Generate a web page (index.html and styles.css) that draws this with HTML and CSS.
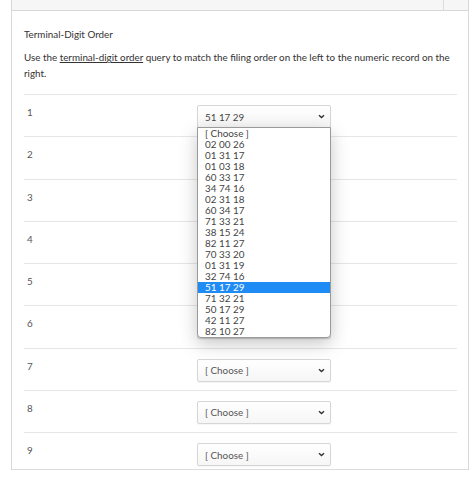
FILE: index.html
```html
<!DOCTYPE html>
<html>
<head>
<meta charset="utf-8">
<link rel="stylesheet" href="styles.css">
</head>
<body>
<div class="frame">
  <div class="topbar"><span class="divider"></span></div>
  <div class="content">
    <div class="title">Terminal-Digit Order</div>
    <p class="intro">Use the <span class="link">terminal-digit order</span> query to match the filing order on the left to the numeric record on the right.</p>
    <div class="rows">
      <div class="row">
        <div class="num">1</div>
        <div class="selwrap">
          <div class="select"><span class="val">51 17 29</span><span class="chev"><svg width="7" height="5" viewBox="0 0 7 5"><path d="M1 1.2 L3.5 3.6 L6 1.2" fill="none" stroke="#333" stroke-width="1.4"/></svg></span></div>
          <div class="listbox">
            <div class="opt">[ Choose ]</div>
            <div class="opt">02 00 26</div>
            <div class="opt">01 31 17</div>
            <div class="opt">01 03 18</div>
            <div class="opt">60 33 17</div>
            <div class="opt">34 74 16</div>
            <div class="opt">02 31 18</div>
            <div class="opt">60 34 17</div>
            <div class="opt">71 33 21</div>
            <div class="opt">38 15 24</div>
            <div class="opt">82 11 27</div>
            <div class="opt">70 33 20</div>
            <div class="opt">01 31 19</div>
            <div class="opt">32 74 16</div>
            <div class="opt sel">51 17 29</div>
            <div class="opt">71 32 21</div>
            <div class="opt">50 17 29</div>
            <div class="opt">42 11 27</div>
            <div class="opt">82 10 27</div>
          </div>
        </div>
      </div>
      <div class="row"><div class="num">2</div><div class="selwrap"><div class="select"><span class="val muted">[ Choose ]</span><span class="chev"><svg width="7" height="5" viewBox="0 0 7 5"><path d="M1 1.2 L3.5 3.6 L6 1.2" fill="none" stroke="#333" stroke-width="1.4"/></svg></span></div></div></div>
      <div class="row"><div class="num">3</div><div class="selwrap"><div class="select"><span class="val muted">[ Choose ]</span><span class="chev"><svg width="7" height="5" viewBox="0 0 7 5"><path d="M1 1.2 L3.5 3.6 L6 1.2" fill="none" stroke="#333" stroke-width="1.4"/></svg></span></div></div></div>
      <div class="row"><div class="num">4</div><div class="selwrap"><div class="select"><span class="val muted">[ Choose ]</span><span class="chev"><svg width="7" height="5" viewBox="0 0 7 5"><path d="M1 1.2 L3.5 3.6 L6 1.2" fill="none" stroke="#333" stroke-width="1.4"/></svg></span></div></div></div>
      <div class="row"><div class="num">5</div><div class="selwrap"><div class="select"><span class="val muted">[ Choose ]</span><span class="chev"><svg width="7" height="5" viewBox="0 0 7 5"><path d="M1 1.2 L3.5 3.6 L6 1.2" fill="none" stroke="#333" stroke-width="1.4"/></svg></span></div></div></div>
      <div class="row"><div class="num">6</div><div class="selwrap"><div class="select"><span class="val muted">[ Choose ]</span><span class="chev"><svg width="7" height="5" viewBox="0 0 7 5"><path d="M1 1.2 L3.5 3.6 L6 1.2" fill="none" stroke="#333" stroke-width="1.4"/></svg></span></div></div></div>
      <div class="row"><div class="num">7</div><div class="selwrap"><div class="select"><span class="val muted">[ Choose ]</span><span class="chev"><svg width="7" height="5" viewBox="0 0 7 5"><path d="M1 1.2 L3.5 3.6 L6 1.2" fill="none" stroke="#333" stroke-width="1.4"/></svg></span></div></div></div>
      <div class="row"><div class="num">8</div><div class="selwrap"><div class="select"><span class="val muted">[ Choose ]</span><span class="chev"><svg width="7" height="5" viewBox="0 0 7 5"><path d="M1 1.2 L3.5 3.6 L6 1.2" fill="none" stroke="#333" stroke-width="1.4"/></svg></span></div></div></div>
      <div class="row"><div class="num">9</div><div class="selwrap"><div class="select"><span class="val muted">[ Choose ]</span><span class="chev"><svg width="7" height="5" viewBox="0 0 7 5"><path d="M1 1.2 L3.5 3.6 L6 1.2" fill="none" stroke="#333" stroke-width="1.4"/></svg></span></div></div></div>
    </div>
  </div>
</div>
</body>
</html>
```

FILE: styles.css
```css
html, body {
  margin: 0;
  padding: 0;
  background: #ffffff;
}
body {
  font-family: Lato, "Liberation Sans", sans-serif;
  color: #333333;
  font-size: 9.83px;
  line-height: 16px;
}
.frame {
  margin-left: 11px;
  width: 458px;
  height: 470px;
  box-sizing: border-box;
  border-left: 1px solid #d8d8d8;
  border-right: 1px solid #d8d8d8;
  border-bottom: 1px solid #dcdcdc;
  overflow: hidden;
  background: #ffffff;
}
.topbar {
  height: 10px;
  background: #f6f6f6;
  border-bottom: 1px solid #d8d8d8;
  position: relative;
}
.divider {
  position: absolute;
  left: 431px;
  top: 0;
  width: 1px;
  height: 10px;
  background: #dddddd;
}
.content {
  padding: 15px 11px 0 12px;
}
.title {
  color: #333333;
}
.intro {
  margin: 7px 0 13px 0;
  color: #333333;
}
.link {
  text-decoration: underline;
}
.row {
  display: flex;
  align-items: flex-start;
  border-top: 1px solid #e6e6e6;
  padding: 10px 0 8.25px 0;
}
.num {
  width: 170px;
  padding-left: 3px;
  color: #555555;
  margin-top: -1px;
}
.selwrap {
  position: relative;
  width: 134px;
}
.select {
  height: 23px;
  box-sizing: border-box;
  border: 1px solid #d6d6d6;
  border-radius: 2px;
  background: linear-gradient(#ffffff, #f6f6f6);
  box-shadow: 0 1px 1px rgba(0,0,0,0.04);
  display: flex;
  align-items: center;
  justify-content: space-between;
  padding: 0 5px 0 7px;
  color: #444444;
}
.val.muted {
  color: #555555;
}
.chev {
  display: flex;
  align-items: center;
}
.listbox {
  position: absolute;
  left: 0;
  top: 22px;
  width: 134px;
  box-sizing: border-box;
  background: #ffffff;
  border: 1px solid #9a9a9a;
  border-radius: 0 0 4px 4px;
  box-shadow: 0 6px 18px rgba(0,0,0,0.22);
  z-index: 5;
}
.opt {
  height: 11px;
  line-height: 11px;
  padding-left: 7px;
  font-size: 9.9px;
  color: #444444;
  white-space: nowrap;
}
.opt.sel {
  background: #1f8cf5;
  color: #ffffff;
}
```
